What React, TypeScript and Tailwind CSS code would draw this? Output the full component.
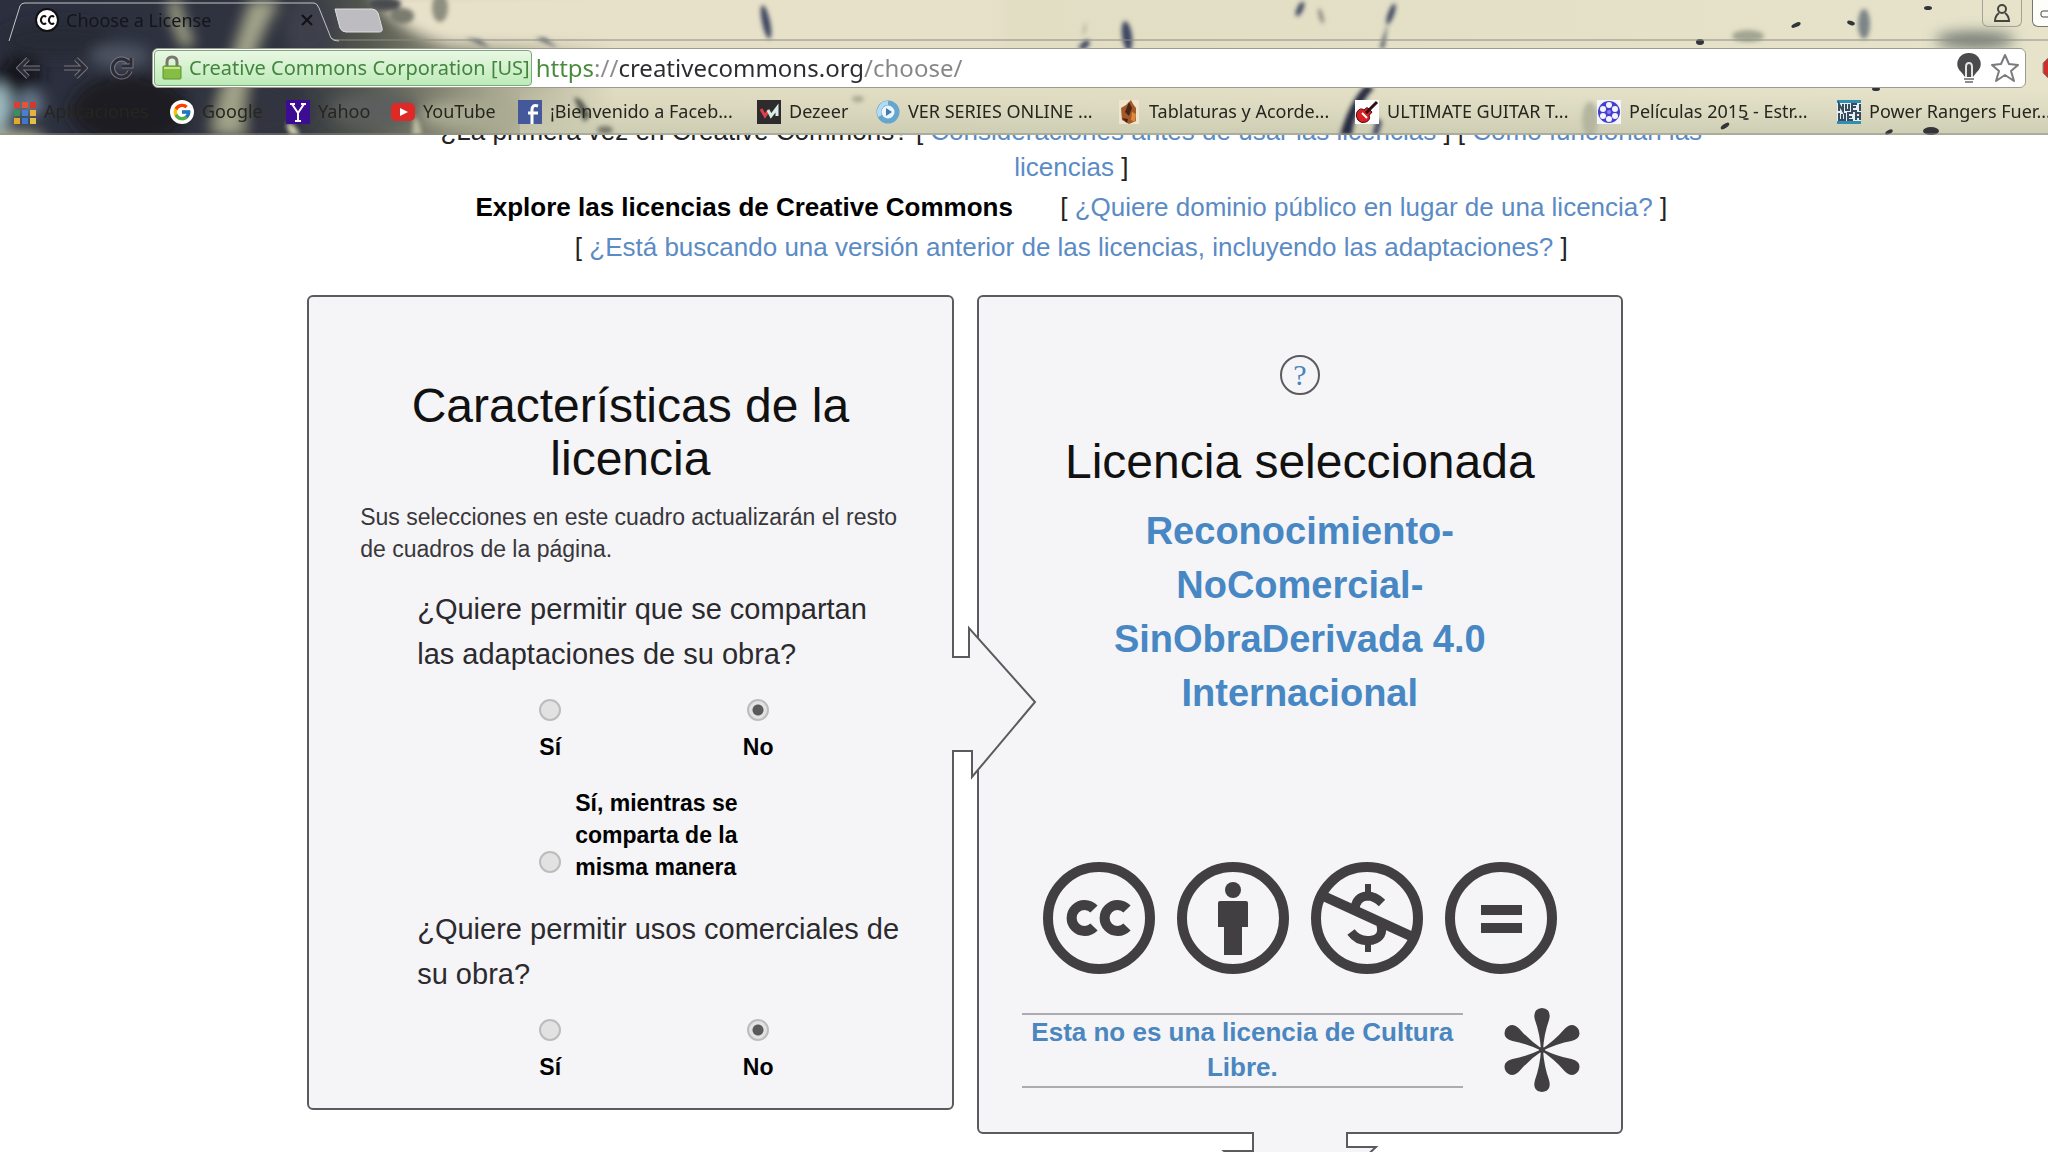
import type { ReactNode } from "react"
import { FcGoogle } from "react-icons/fc"

const INK = "#413f42"
const PANEL = "#f5f4f6"
const EDGE = "#5c5a5e"

// Browser theme: wet glass, dark on the left and cream on the right
function ThemeArt() {
  return (
    <svg className="absolute inset-0 w-full h-full" viewBox="0 0 2048 135" preserveAspectRatio="none" aria-hidden="true">
      <defs>
        <linearGradient id="glass" x1="0" y1="0" x2="2048" y2="0" gradientUnits="userSpaceOnUse">
          <stop offset="0" stopColor="#2b2f3e" />
          <stop offset="0.14" stopColor="#30343f" />
          <stop offset="0.18" stopColor="#55584f" />
          <stop offset="0.24" stopColor="#a5a48c" />
          <stop offset="0.3" stopColor="#e0dcc2" />
          <stop offset="1" stopColor="#e6e3ca" />
        </linearGradient>
        <linearGradient id="shade" x1="0" y1="0" x2="0" y2="1">
          <stop offset="0" stopColor="#d3d2b8" stopOpacity="0" />
          <stop offset="1" stopColor="#c9cab0" stopOpacity="0.85" />
        </linearGradient>
        <filter id="soft" x="-50%" y="-50%" width="200%" height="200%"><feGaussianBlur stdDeviation="7" /></filter>
        <filter id="drop" x="-50%" y="-50%" width="200%" height="200%"><feGaussianBlur stdDeviation="2" /></filter>
      </defs>
      <rect width="2048" height="135" fill="url(#glass)" />
      <g filter="url(#soft)">
        <path d="M370 -10H1000V45H450Q390 30 370 -10Z" fill="#e8e1ca" />
        <ellipse cx="130" cy="110" rx="60" ry="36" fill="#1a1b24" />
        <ellipse cx="60" cy="40" rx="60" ry="18" fill="#262936" />
        <ellipse cx="20" cy="75" rx="22" ry="20" fill="#15161f" />
        <ellipse cx="120" cy="56" rx="30" ry="12" fill="#4d5362" />
        <ellipse cx="-4" cy="108" rx="16" ry="24" fill="#9dbbc0" />
        <ellipse cx="30" cy="104" rx="14" ry="14" fill="#66788a" />
        <ellipse cx="14" cy="140" rx="32" ry="9" fill="#b9bd9d" />
        <ellipse cx="250" cy="110" rx="60" ry="30" fill="#33363f" />
        <path d="M212 135Q228 60 250 0H280Q236 80 244 135Z" fill="#a3a48a" />
        <path d="M168 0Q172 30 185 50L194 40Q180 20 180 0Z" fill="#b5b592" />
        <ellipse cx="310" cy="30" rx="24" ry="30" fill="#3c404b" />
        <ellipse cx="375" cy="110" rx="45" ry="16" fill="#5b5f5e" />
        <ellipse cx="470" cy="115" rx="50" ry="14" fill="#a9aa92" />
        <ellipse cx="1975" cy="40" rx="40" ry="8" fill="#6d7570" />
      </g>
      <rect y="88" x="520" width="1528" height="47" fill="url(#shade)" />
      <g filter="url(#drop)" fill="#3d4660">
        <ellipse cx="440" cy="8" rx="8" ry="14" fill="#8f8f80" />
        <ellipse cx="402" cy="16" rx="12" ry="8" fill="#7a7b70" />
        <ellipse cx="385" cy="4" rx="16" ry="7" fill="#4a4c4f" />
        <path d="M465 38L490 48 480 40ZM535 38L558 48 545 38Z" fill="#4c5366" />
        <path d="M286 125Q292 118 300 135H290Z" fill="#c9caa8" />
        <path d="M414 116Q420 120 422 135H412Z" fill="#b9ba9c" />
        <ellipse cx="766" cy="22" rx="4" ry="17" transform="rotate(-12 766 22)" />
        <ellipse cx="1127" cy="36" rx="5" ry="15" transform="rotate(-8 1127 36)" />
        <path d="M1078 48Q1088 34 1090 44L1084 50Z" />
        <path d="M1085 22Q1088 30 1082 36Z" fill="#a9aa95" />
        <path d="M1340 135Q1350 100 1366 85L1374 88Q1354 110 1352 135Z" fill="#252b40" />
        <path d="M1372 135L1377 118 1382 122 1378 135Z" />
        <ellipse cx="1391" cy="14" rx="3" ry="11" transform="rotate(20 1391 14)" />
        <path d="M1388 22L1380 48H1384Z" />
        <ellipse cx="1300" cy="9" rx="3" ry="8" transform="rotate(25 1300 9)" />
        <ellipse cx="1321" cy="16" rx="2" ry="8" transform="rotate(-15 1321 16)" fill="#86867a" />
        <ellipse cx="1864" cy="24" rx="6" ry="15" fill="#7c8587" />
        <ellipse cx="1748" cy="36" rx="16" ry="6" fill="#a3a592" />
        <ellipse cx="1590" cy="120" rx="8" ry="18" fill="#b4b6a0" />
        <path d="M574 98Q582 96 590 116L584 122Z" fill="#54594f" />
        <ellipse cx="605" cy="130" rx="8" ry="4" fill="#77786a" />
        <ellipse cx="858" cy="99" rx="6" ry="3" fill="#a5a68f" />
      </g>
      <g fill="#33353a">
        <ellipse cx="1700" cy="42" rx="4" ry="3" />
        <ellipse cx="1796" cy="25" rx="5" ry="2" transform="rotate(-25 1796 25)" />
        <ellipse cx="1851" cy="23" rx="4" ry="2" transform="rotate(20 1851 23)" />
        <ellipse cx="1928" cy="8" rx="4" ry="2" />
        <ellipse cx="1725" cy="126" rx="5" ry="2" transform="rotate(-35 1725 126)" />
        <ellipse cx="1931" cy="131" rx="8" ry="4" />
        <ellipse cx="1889" cy="132" rx="4" ry="2" transform="rotate(-25 1889 132)" />
        <ellipse cx="1876" cy="89" rx="4" ry="2" />
        <ellipse cx="1746" cy="119" rx="3" ry="1" />
      </g>
      <path d="M331 38Q333 40 339 40H2048" fill="none" stroke="#8c8c80" strokeWidth="1" />
      <path d="M9 41L20 6Q21 3 25 3H314Q317 3 319 8L331 38Q333 41 339 41" fill="none" stroke="#c4c4c4" strokeWidth="1" />
      <path d="M335 9H372Q376 9 378 13L382 28Q383 32 379 32H346Q342 32 340 28Z" fill="#bdbcc0" stroke="#e0dfe0" />
      <path d="M0 134H2048" stroke="#8b8b82" strokeWidth="1" />
    </svg>
  )
}

function CcFavicon() {
  return (
    <svg width="26" height="26" viewBox="0 0 26 26" aria-hidden="true">
      <circle cx="13" cy="13" r="11" fill="#fff" stroke="#111" strokeWidth="2" />
      <path d="M12 10A3 4 0 1 0 12 16M20 10A3 4 0 1 0 20 16" fill="none" stroke="#111" strokeWidth="2" />
    </svg>
  )
}

function NavArrow({ d }: { d: string }) {
  return (
    <svg width="26" height="26" viewBox="0 0 26 26" fill="none" aria-hidden="true">
      <path d={d} stroke="#777781" strokeWidth="5" />
      <path d={d} stroke="#2c2c36" strokeWidth="3" />
    </svg>
  )
}

const APP_DOTS = ["#d8412f", "#e0563a", "#d3382b", "#3c8f5a", "#4a7fd0", "#e8b13a", "#e3a92f", "#3f78c9", "#e1c04a"]

const ICONS: Record<string, ReactNode> = {
  apps: APP_DOTS.map((c, i) => <rect key={i} x={2 + (i % 3) * 8} y={2 + Math.floor(i / 3) * 8} width="6" height="6" fill={c} />),
  yahoo: (
    <>
      <rect width="24" height="24" fill="#3c0c93" />
      <path d="M6 4L12 13 18 4M12 13V21M4 4H9M15 4H20M9 21H15" fill="none" stroke="#fff" strokeWidth="2" />
    </>
  ),
  youtube: (
    <>
      <rect y="3" width="24" height="18" rx="5" fill="#de2a26" />
      <path d="M9 8L17 12 9 16Z" fill="#fff" />
    </>
  ),
  facebook: (
    <>
      <rect width="24" height="24" fill="#45589b" />
      <path d="M20 6Q14 4 14 10V24M10 13H20" fill="none" stroke="#fff" strokeWidth="3" />
    </>
  ),
  deezer: (
    <>
      <rect width="24" height="24" fill="#2e2b2d" />
      <path d="M4 9L8 16 12 10" fill="none" stroke="#e0404a" strokeWidth="3" />
      <path d="M11 10L14 16 20 8V16" fill="none" stroke="#d6ece4" strokeWidth="3" />
    </>
  ),
  series: (
    <>
      <circle cx="12" cy="12" r="9" fill="#eef6fb" stroke="#63a6d0" strokeWidth="5" />
      <path d="M4 16A9 9 0 0 1 12 3" fill="none" stroke="#b5dbee" strokeWidth="4" />
      <path d="M10 8L16 12 10 16Z" fill="#3b7fae" />
    </>
  ),
  tabs: (
    <>
      <rect width="20" height="24" x="2" fill="#efe4cd" />
      <path d="M4 8L9 5 14 0 16 4 19 8V21L12 24 5 20Z" fill="#a4592a" />
      <path d="M12 2L15 8 12 16 8 12ZM5 18L11 19 10 23Z" fill="#4a2513" />
      <path d="M15 12L19 14 18 22 14 20Z" fill="#d98a3d" />
    </>
  ),
  guitar: (
    <>
      <rect width="24" height="24" fill="#fff" />
      <path d="M2 12Q5 7 9 10Q12 6 14 9L17 12Q16 14 14 15Q16 20 11 22Q6 24 3 20Q0 16 2 12Z" fill="#dc1f22" stroke="#4a0b0c" />
      <path d="M11 13L22 2" stroke="#301010" strokeWidth="3" />
      <path d="M7 13L12 18" stroke="#fff" strokeWidth="2" />
    </>
  ),
  reel: (
    <>
      <rect width="24" height="24" fill="#f4f4fb" />
      <circle cx="12" cy="12" r="11" fill="#443dd0" />
      {[[12, 5], [18, 9], [18, 16], [12, 19], [6, 16], [6, 9]].map(([x, y]) => <circle key={`${x}-${y}`} cx={x} cy={y} r="3" fill="#f4f4fb" />)}
      <circle cx="12" cy="12" r="2" fill="#8a86e6" />
    </>
  ),
  power: (
    <>
      <rect width="24" height="24" fill="#e7f1f2" />
      <path d="M0 1H24M0 23H24" stroke="#2f8fb0" strokeWidth="4" />
      <path d="M2 11V4L6 11V4M9 4V10H12V4M20 4H15V11H20M15 7H19M23 4V11" fill="none" stroke="#3a4a60" strokeWidth="2" />
      <path d="M2 13V20H5V14M5 20H8V13M16 13H11V20H16M11 17H15M19 20V13H23V20M19 17H23" fill="none" stroke="#3a4a60" strokeWidth="2" />
    </>
  ),
}

const BOOKMARKS = [
  { icon: "apps", label: "Aplicaciones", cls: "w-[158px]" },
  { icon: "google", label: "Google", cls: "w-[116px]" },
  { icon: "yahoo", label: "Yahoo", cls: "w-[105px]" },
  { icon: "youtube", label: "YouTube", cls: "w-[127px]" },
  { icon: "facebook", label: "¡Bienvenido a Faceb...", cls: "w-[239px]" },
  { icon: "deezer", label: "Dezeer", cls: "w-[119px]" },
  { icon: "series", label: "VER SERIES ONLINE ...", cls: "w-[241px]" },
  { icon: "tabs", label: "Tablaturas y Acorde...", cls: "w-[238px]" },
  { icon: "guitar", label: "ULTIMATE GUITAR T...", cls: "w-[242px]" },
  { icon: "reel", label: "Películas 2015 - Estr...", cls: "w-[240px]" },
  { icon: "power", label: "Power Rangers Fuer...", cls: "w-[240px]" },
]

function Bookmark({ icon, label, cls }: { icon: string; label: string; cls: string }) {
  return (
    <a href="#" className={`flex shrink-0 items-center gap-2 whitespace-nowrap text-[#26261f] ${cls}`}>
      {icon === "google" ? (
        <span className="flex size-6 shrink-0 items-center justify-center rounded-full bg-white"><FcGoogle size={20} /></span>
      ) : (
        <svg width="24" height="24" viewBox="0 0 24 24" className="shrink-0" aria-hidden="true">{ICONS[icon]}</svg>
      )}
      {label}
    </a>
  )
}

function BrowserChrome() {
  return (
    <header className="relative z-10 h-[135px] shrink-0 overflow-hidden font-['Noto_Sans',sans-serif] text-[18px]">
      <ThemeArt />
      <div className="relative flex h-full flex-col">
        <div className="flex h-10 items-start justify-between">
          <div className="flex h-10 w-[314px] items-center gap-[6px] pl-[34px] text-[#14151b]">
            <CcFavicon />
            <span className="flex-1">Choose a License</span>
            <button type="button" aria-label="Cerrar pestaña">
              <svg width="14" height="14" viewBox="0 0 14 14"><path d="M2 2L12 12M12 2L2 12" stroke="#111218" strokeWidth="2" /></svg>
            </button>
          </div>
          <div className="flex items-start gap-[10px]">
            <button type="button" aria-label="Perfil" className="flex h-[27px] w-10 items-center justify-center rounded-b-md border border-t-0 border-[#a3a294]">
              <svg width="16" height="18" viewBox="0 0 16 18" fill="none" stroke="#444" strokeWidth="2">
                <circle cx="8" cy="5" r="4" />
                <path d="M5 9Q1 12 1 17H15Q15 12 11 9" />
              </svg>
            </button>
            <button type="button" aria-label="Minimizar" className="flex h-[27px] w-4 items-center justify-end overflow-hidden rounded-bl-md border border-t-0 border-r-0 border-[#77776e] bg-white/90">
              <svg width="8" height="10" viewBox="0 0 8 10"><rect x="1" y="3" width="14" height="6" rx="2" fill="none" stroke="#444" /></svg>
            </button>
          </div>
        </div>

        <div className="flex items-center pt-2">
          <div className="flex w-[152px] shrink-0 items-center gap-5 pl-4">
            <button type="button" aria-label="Atrás"><NavArrow d="M24 13H4M12 4L3 13 12 22" /></button>
            <button type="button" aria-label="Adelante"><NavArrow d="M2 13H22M14 4L23 13 14 22" /></button>
            <button type="button" aria-label="Recargar"><NavArrow d="M21 8A9 9 0 1 0 22 16M23 3V11H14" /></button>
          </div>
          <div className="flex h-10 min-w-0 flex-1 items-center rounded-md border border-[#9a9a90] bg-white px-px">
            <button type="button" className="flex h-9 shrink-0 items-center gap-[6px] whitespace-nowrap rounded border border-[#78a978] bg-linear-to-b from-[#eaf7e4] to-[#bdebb8] pr-px pl-[6px] text-[20px] text-[#43843f]">
              <svg width="22" height="26" viewBox="0 0 22 26" aria-hidden="true">
                <path d="M6 12V7Q6 2 11 2Q16 2 16 7V12" fill="none" stroke="#77796f" strokeWidth="3" />
                <rect x="2" y="11" width="18" height="13" rx="1" fill="#86bd45" stroke="#5f9130" />
                <path d="M3 13H19" stroke="#c4e58f" strokeWidth="2" />
              </svg>
              Creative Commons Corporation [US]
            </button>
            <input
              type="text"
              aria-label="Dirección"
              defaultValue="https://creativecommons.org/choose/"
              className="h-9 min-w-0 flex-1 bg-[linear-gradient(90deg,#4a8a3c_61px,#8c8c8c_61px,#8c8c8c_86px,#2c2c30_86px,#2c2c30_330px,#868686_330px)] bg-clip-text pl-1 text-[24px] text-transparent caret-black outline-none"
            />
            <div className="flex items-center gap-2 pr-1">
              <button type="button" aria-label="Sugerencias">
                <svg width="26" height="40" viewBox="0 0 26 40">
                  <path d="M13 5A11 11 0 0 1 20 25L17 29H9L6 25A11 11 0 0 1 13 5Z" fill="#4b4b4b" />
                  <path d="M10 29V19Q10 15 13 15Q16 15 16 19V29" fill="none" stroke="#e4e4e4" strokeWidth="2" />
                  <path d="M8 31H18M9 34H17" stroke="#8c8c8c" strokeWidth="2" />
                </svg>
              </button>
              <button type="button" aria-label="Añadir a marcadores">
                <svg width="30" height="30" viewBox="0 0 30 30">
                  <path d="M15 2L19 11 28 12 21 18 24 28 15 22 6 28 9 18 2 12 11 11Z" fill="#fff" stroke="#7b7b7b" strokeWidth="2" strokeLinejoin="round" />
                </svg>
              </button>
            </div>
          </div>
          <button type="button" aria-label="Extensión" className="w-[22px] shrink-0 overflow-hidden pl-4">
            <svg width="26" height="26" viewBox="0 0 26 26"><path d="M8 1H18L25 8V18L18 25H8L1 18V8Z" fill="#cf2f2c" stroke="#8a8a80" /></svg>
          </button>
        </div>

        <nav className="flex h-12 items-center pl-3">
          {BOOKMARKS.map(b => <Bookmark key={b.label} {...b} />)}
        </nav>
      </div>
    </header>
  )
}

function Bracketed({ children }: { children: ReactNode }) {
  return <>[ <a href="#" className="text-[#5b8bc4]">{children}</a> ]</>
}

function Choice({ name, label, checked }: { name: string; label: string; checked?: boolean }) {
  return (
    <label className="flex w-[60px] flex-col items-center gap-[10px] font-bold text-black">
      <Radio name={name} checked={checked} />
      {label}
    </label>
  )
}

function Radio({ name, checked }: { name: string; checked?: boolean }) {
  return (
    <input
      type="radio"
      name={name}
      defaultChecked={checked}
      className="size-[22px] shrink-0 appearance-none rounded-full border-2 border-[#bcbcbc] bg-[#e2e2e2] checked:bg-[radial-gradient(circle,#5a5a5a_5px,#e2e2e2_6px)]"
    />
  )
}

function Question({ children }: { children: ReactNode }) {
  return <legend className="text-[29px] leading-[45px] text-[#2b2a2e]">{children}</legend>
}

function FeaturesPanel() {
  return (
    <section className="relative z-10 flex-1 rounded-md border-2 border-[#5c5a5e] bg-[#f5f4f6] pt-[82px] pb-[25px] text-[23px] leading-8">
      <h2 className="px-12 text-center text-5xl leading-[53px] text-[#111]">Características de la licencia</h2>
      <p className="mt-4 pr-10 pl-[51px] text-[#38373b]">Sus selecciones en este cuadro actualizarán el resto de cuadros de la página.</p>

      <fieldset className="mt-[22px] pr-10 pl-[108px]">
        <Question>¿Quiere permitir que se compartan las adaptaciones de su obra?</Question>
        <div className="mt-[22px] flex gap-[148px] pl-[103px]">
          <Choice name="adaptations" label="Sí" />
          <Choice name="adaptations" label="No" checked />
        </div>
        <label className="mt-6 flex items-end gap-[14px] pl-[122px] font-bold text-black">
          <span className="flex pb-[10px]"><Radio name="adaptations" /></span>
          <span className="w-[180px]">Sí, mientras se comparta de la misma manera</span>
        </label>
      </fieldset>

      <fieldset className="mt-6 pr-8 pl-[108px]">
        <Question>¿Quiere permitir usos comerciales de su obra?</Question>
        <div className="mt-[22px] flex gap-[148px] pl-[103px]">
          <Choice name="commercial" label="Sí" />
          <Choice name="commercial" label="No" checked />
        </div>
      </fieldset>

      {/* arrow that points into the next panel */}
      <svg width="88" height="156" viewBox="0 0 88 156" className="absolute top-[328px] left-full" aria-hidden="true">
        <path d="M0 32H17V3L83 77 20 152V126H0Z" fill={PANEL} />
        <path d="M0 32H17V3L83 77 20 152V126H0" fill="none" stroke={EDGE} strokeWidth="2" />
      </svg>
    </section>
  )
}

function Badge({ label, children }: { label: string; children: ReactNode }) {
  return (
    <svg width="112" height="112" viewBox="0 0 112 112" role="img" aria-label={label}>
      <circle cx="56" cy="56" r="51" fill="none" stroke={INK} strokeWidth="10" />
      {children}
    </svg>
  )
}

function SelectedPanel() {
  return (
    <section className="relative flex-1 rounded-md border-2 border-[#5c5a5e] bg-[#f5f4f6] pt-[58px] pb-[40px] text-center">
      <a href="#" className="mx-auto flex size-10 items-center justify-center rounded-full border-2 border-[#5c5a5e] font-['Liberation_Serif',serif] text-[30px] leading-none text-[#4a83bd]">?</a>
      <h2 className="mt-10 text-5xl leading-[53px] text-[#111]">Licencia seleccionada</h2>
      <p className="mx-auto mt-4 w-[400px] text-[38px] leading-[54px] font-bold">
        <a href="#" className="text-[#4787c3]">Reconocimiento-<wbr />NoComercial-<wbr />SinObraDerivada 4.0 Internacional</a>
      </p>

      <div className="mt-[142px] flex justify-center gap-[22px]">
        <Badge label="Creative Commons">
          <path d="M51 47A13 13 0 1 0 51 65M84 47A13 13 0 1 0 84 65" fill="none" stroke={INK} strokeWidth="10" />
        </Badge>
        <Badge label="Reconocimiento">
          <circle cx="56" cy="28" r="8" fill={INK} />
          <path d="M43 39H69Q71 39 71 41V65H65V93H47V65H41V41Q41 39 43 39Z" fill={INK} />
        </Badge>
        <Badge label="No comercial">
          <path d="M8 32L104 76" stroke={INK} strokeWidth="10" />
          <path d="M57 22V36M57 76V90" stroke={INK} strokeWidth="6" />
          <path d="M71 41Q64 34 56 34Q45 35 44 47M70 63Q73 75 62 78Q48 81 40 70" fill="none" stroke={INK} strokeWidth="9" />
        </Badge>
        <Badge label="Sin obra derivada">
          <path d="M36 48H77M36 66H77" stroke={INK} strokeWidth="10" />
        </Badge>
      </div>

      <div className="mt-[34px] flex items-center gap-[41px] pr-[41px] pl-[43px]">
        <p className="flex-1 border-y-2 border-[#acabae] pb-px text-[26px] leading-[35px] font-bold">
          <a href="#" className="text-[#4a86c0]">Esta no es una licencia de Cultura Libre.</a>
        </p>
        <svg width="76" height="84" viewBox="-38 -42 76 84" className="shrink-0" aria-hidden="true">
          {[0, 60, 120, 180, 240, 300].map(a => (
            <path key={a} d="M-1 0Q-2 -16 -7 -30Q-10 -41 0 -42Q10 -41 7 -30Q2 -16 1 0Z" fill={INK} transform={`rotate(${a})`} />
          ))}
          <circle r="3" fill={INK} />
        </svg>
      </div>

      {/* arrow that leads down to the next row */}
      <svg width="160" height="90" viewBox="0 0 160 90" className="absolute top-full left-1/2 -ml-[80px]" aria-hidden="true">
        <path d="M33 0V19H4L80 86 156 15H127V0Z" fill={PANEL} />
        <path d="M33 0V19H4L80 86 156 15H127V0" fill="none" stroke={EDGE} strokeWidth="2" />
      </svg>
    </section>
  )
}

export default function App() {
  return (
    <div className="flex h-screen flex-col overflow-hidden bg-white font-['Liberation_Sans',Arial,sans-serif]">
      <BrowserChrome />
      <main className="min-h-0 flex-1 overflow-hidden">
        {/* page is scrolled a little, so the first line sits half under the toolbar */}
        <div className="-mt-[22px] pr-[315px] pl-[20%] text-center text-[26px] leading-10 text-[#222]">
          <p className="mb-[2px] leading-9">
            ¿La primera vez en Creative Commons? <Bracketed>Consideraciones antes de usar las licencias</Bracketed>{" "}
            <Bracketed>Cómo funcionan las licencias</Bracketed>
          </p>
          <p>
            <strong className="mr-10 text-black">Explore las licencias de Creative Commons</strong>{" "}
            <Bracketed>¿Quiere dominio público en lugar de una licencia?</Bracketed>
          </p>
          <p><Bracketed>¿Está buscando una versión anterior de las licencias, incluyendo las adaptaciones?</Bracketed></p>
        </div>
        <div className="mt-7 flex items-start gap-[23px] pr-[425px] pl-[15%]">
          <FeaturesPanel />
          <SelectedPanel />
        </div>
      </main>
    </div>
  )
}
